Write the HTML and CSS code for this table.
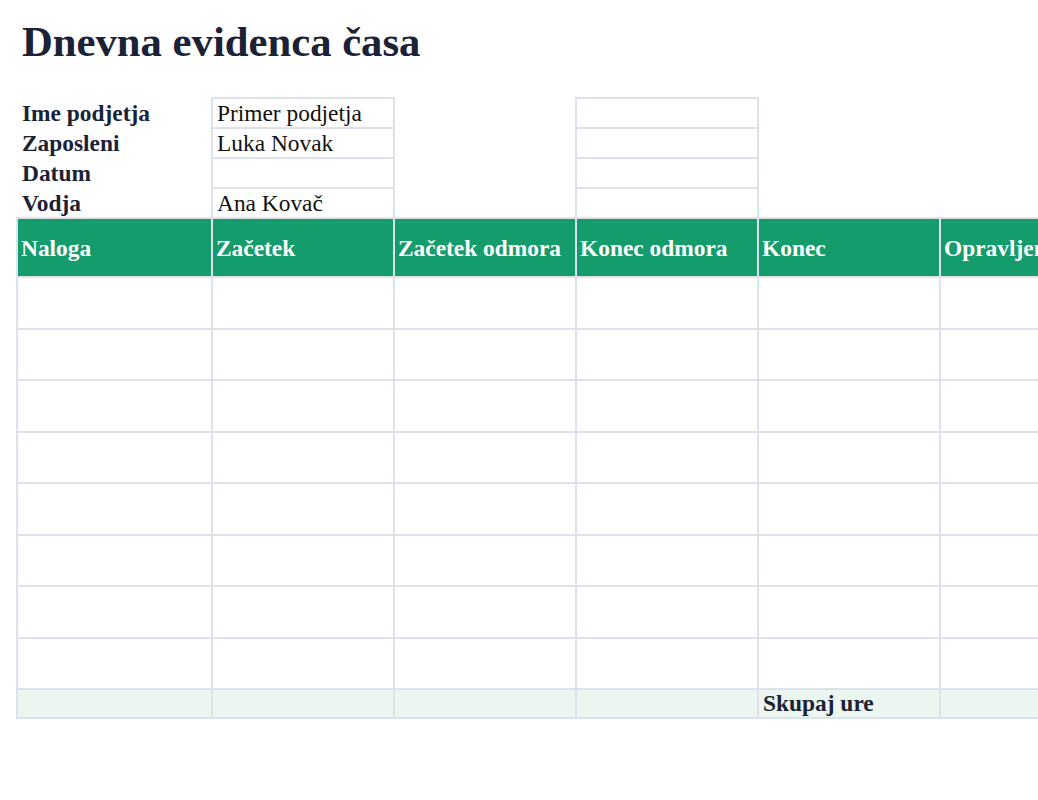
FILE: index.html
```html
<!DOCTYPE html>
<html lang="sl">
<head>
<meta charset="utf-8">
<title>Dnevna evidenca časa</title>
<link rel="stylesheet" href="styles.css">
</head>
<body>
<main class="page">
  <h1 class="title">Dnevna evidenca časa</h1>
  <table class="sheet">
    <colgroup>
      <col class="c1"><col class="c"><col class="c"><col class="c"><col class="c"><col class="c"><col class="c">
    </colgroup>
    <tbody>
      <tr class="info">
        <td class="label">Ime podjetja</td><td class="box">Primer podjetja</td><td></td><td class="box"></td><td></td><td></td><td></td>
      </tr>
      <tr class="info">
        <td class="label">Zaposleni</td><td class="box">Luka Novak</td><td></td><td class="box"></td><td></td><td></td><td></td>
      </tr>
      <tr class="info">
        <td class="label">Datum</td><td class="box"></td><td></td><td class="box"></td><td></td><td></td><td></td>
      </tr>
      <tr class="info">
        <td class="label">Vodja</td><td class="box">Ana Kovač</td><td></td><td class="box"></td><td></td><td></td><td></td>
      </tr>
      <tr class="head">
        <th>Naloga</th><th>Začetek</th><th>Začetek odmora</th><th>Konec odmora</th><th>Konec</th><th>Opravljene ure</th><th></th>
      </tr>
      <tr class="row"><td></td><td></td><td></td><td></td><td></td><td></td><td></td></tr>
      <tr class="row"><td></td><td></td><td></td><td></td><td></td><td></td><td></td></tr>
      <tr class="row"><td></td><td></td><td></td><td></td><td></td><td></td><td></td></tr>
      <tr class="row"><td></td><td></td><td></td><td></td><td></td><td></td><td></td></tr>
      <tr class="row"><td></td><td></td><td></td><td></td><td></td><td></td><td></td></tr>
      <tr class="row"><td></td><td></td><td></td><td></td><td></td><td></td><td></td></tr>
      <tr class="row"><td></td><td></td><td></td><td></td><td></td><td></td><td></td></tr>
      <tr class="row"><td></td><td></td><td></td><td></td><td></td><td></td><td></td></tr>
      <tr class="total">
        <td></td><td></td><td></td><td></td><td class="sum-label">Skupaj ure</td><td></td><td></td>
      </tr>
    </tbody>
  </table>
</main>
</body>
</html>
```
FILE: styles.css
```css
html, body {
  margin: 0;
  padding: 0;
  background: #ffffff;
  overflow: hidden;
}

.page {
  padding: 17px 0 0 16px;
  font-family: "Liberation Serif", "Times New Roman", serif;
  color: #1b2236;
  width: 1400px;
}

.title {
  margin: 0 0 31px 0;
  padding-left: 6px;
  font-size: 42.7px;
  line-height: 49px;
  font-weight: 700;
  color: #1b2236;
}

.sheet {
  border-collapse: collapse;
  table-layout: fixed;
  width: 1286px;
  font-size: 23.4px;
  line-height: 26px;
}

.sheet col.c1 { width: 195px; }
.sheet col.c { width: 182px; }

.sheet td,
.sheet th {
  padding: 1px 4px;
  border: 2px solid #dde2ea;
  text-align: left;
  vertical-align: middle;
  white-space: nowrap;
  overflow: hidden;
}

.info {
  height: 30px;
}

.info td {
  border: none;
  color: #111111;
}

.info td.label {
  font-weight: 700;
  color: #1b2236;
  padding-left: 5px;
}

.info td.box {
  border: 2px solid #dde2ea;
}

.head th {
  height: 57px;
  padding: 0 4px 0 3px;
  background: #149c6c;
  color: #ffffff;
  font-weight: 700;
}

.row td {
  height: 47.5px;
}

.total {
  height: 29px;
}

.total td {
  background: #ebf6f0;
  padding: 0 4px;
  line-height: 25px;
}

.total td.sum-label {
  font-weight: 700;
  color: #1b2236;
}
```
